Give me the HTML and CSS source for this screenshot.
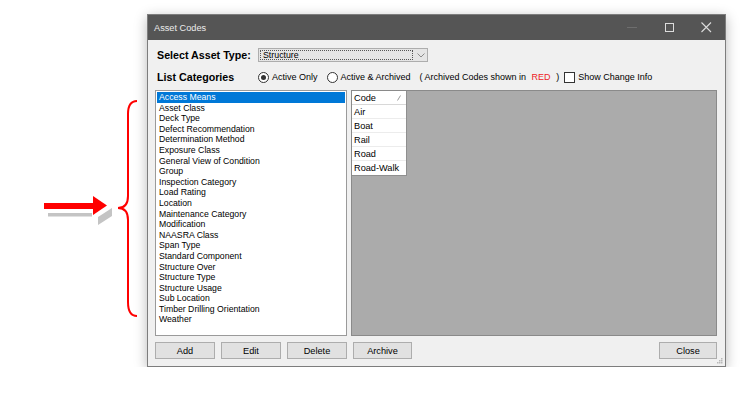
FILE: index.html
```html
<!DOCTYPE html>
<html lang="en">
<head>
    <meta charset="UTF-8">
    <meta name="viewport" content="width=device-width, initial-scale=1.0">
    <title>Asset Codes</title>
    <link rel="stylesheet" href="styles.css">
</head>
<body>
<div class="stage">
  <!-- callout arrow and brace pointing at the category list -->
  <svg class="callout" width="107" height="353" viewBox="0 0 107 353">
    <rect x="8" y="199" width="44" height="3.5" fill="#c4c4c4"/>
    <polygon points="58,203 72,194 72,202 58,211" fill="#c4c4c4"/>
    <rect x="4" y="189" width="50" height="6" fill="#f00"/>
    <polygon points="53,182 67,191.5 53,201" fill="#f00"/>
    <path d="M97,87 C90,87 88,92 88,100 L88,182 C88,190 85,194 78,194 C85,194 88,198 88,206 L88,288 C88,296 90,302 97,302" fill="none" stroke="#f00" stroke-width="2"/>
  </svg>

  <div class="window">
    <div class="titlebar">
      <span class="title">Asset Codes</span>
      <span class="ctl">
        <svg width="11" height="11" viewBox="0 0 11 11"><line x1="0" y1="5.5" x2="10" y2="5.5" stroke="#6e6e6e"/></svg>
      </span>
      <span class="ctl">
        <svg width="10" height="10" viewBox="0 0 10 10"><rect x="0.5" y="0.5" width="8" height="8" fill="none" stroke="#dcdcdc"/></svg>
      </span>
      <span class="ctl">
        <svg width="11" height="11" viewBox="0 0 11 11"><path d="M0.5,0.5 L10,10 M10,0.5 L0.5,10" stroke="#dcdcdc" stroke-width="1.1"/></svg>
      </span>
    </div>

    <div class="content">
      <div class="row type-row">
        <span class="field-label">Select Asset Type:</span>
        <div class="combo">
          <span class="combo-value">Structure</span>
          <svg class="chevron" width="8" height="5" viewBox="0 0 8 5"><path d="M0.5,0.5 L4,4 L7.5,0.5" fill="none" stroke="#8a8a8a"/></svg>
        </div>
      </div>

      <div class="row cat-row">
        <span class="field-label">List Categories</span>
        <label class="opt"><span class="radio checked"></span>Active Only</label>
        <label class="opt opt-2"><span class="radio"></span>Active &amp; Archived</label>
        <span class="note">( Archived Codes shown in <span class="red">RED</span> )</span>
        <label class="opt opt-check"><span class="check"></span>Show Change Info</label>
      </div>

      <div class="main">
        <ul class="listbox">
          <li class="selected">Access Means</li>
          <li>Asset Class</li>
          <li>Deck Type</li>
          <li>Defect Recommendation</li>
          <li>Determination Method</li>
          <li>Exposure Class</li>
          <li>General View of Condition</li>
          <li>Group</li>
          <li>Inspection Category</li>
          <li>Load Rating</li>
          <li>Location</li>
          <li>Maintenance Category</li>
          <li>Modification</li>
          <li>NAASRA Class</li>
          <li>Span Type</li>
          <li>Standard Component</li>
          <li>Structure Over</li>
          <li>Structure Type</li>
          <li>Structure Usage</li>
          <li>Sub Location</li>
          <li>Timber Drilling Orientation</li>
          <li>Weather</li>
        </ul>

        <div class="grid">
          <div class="grid-col">
            <div class="cell head">Code
              <svg class="sort" width="4" height="6" viewBox="0 0 4 6"><line x1="0.5" y1="5.5" x2="3.5" y2="0.5" stroke="#9a9a9a"/></svg>
            </div>
            <div class="cell">Air</div>
            <div class="cell">Boat</div>
            <div class="cell">Rail</div>
            <div class="cell">Road</div>
            <div class="cell">Road-Walk</div>
          </div>
        </div>
      </div>

      <div class="buttons">
        <button class="btn">Add</button>
        <button class="btn">Edit</button>
        <button class="btn">Delete</button>
        <button class="btn btn-archive">Archive</button>
        <button class="btn btn-close">Close</button>
      </div>
    </div>

    <svg class="grip" width="7" height="7" viewBox="0 0 7 7">
      <rect x="5" y="1" width="1.5" height="1.5" fill="#b8b8b8"/>
      <rect x="3" y="3" width="1.5" height="1.5" fill="#b8b8b8"/>
      <rect x="5" y="3" width="1.5" height="1.5" fill="#b8b8b8"/>
      <rect x="1" y="5" width="1.5" height="1.5" fill="#b8b8b8"/>
      <rect x="3" y="5" width="1.5" height="1.5" fill="#b8b8b8"/>
      <rect x="5" y="5" width="1.5" height="1.5" fill="#b8b8b8"/>
    </svg>
  </div>
</div>
</body>
</html>
```

FILE: styles.css
```css
body {
  margin: 0;
  background: #fff;
  font-family: "Liberation Sans", Arial, sans-serif;
  color: #000;
}

.stage {
  display: flex;
  align-items: flex-start;
  padding: 14px 0 0 40px;
}

.callout {
  display: block;
  flex: none;
}

.window {
  position: relative;
  width: 579px;
  height: 353px;
  box-sizing: border-box;
  border: 1px solid #7d7d7d;
  background: #f0f0f0;
  box-shadow: 0 3px 12px rgba(0, 0, 0, 0.28);
  display: flex;
  flex-direction: column;
}

.titlebar {
  height: 25px;
  background: #555;
  display: flex;
  align-items: center;
  flex: none;
}

.title {
  flex: 1;
  padding-left: 6px;
  font-size: 9.2px;
  color: #ececec;
}

.ctl {
  width: 37px;
  height: 25px;
  display: flex;
  align-items: center;
  justify-content: center;
}

.content {
  padding: 0 8px 7px 7px;
  display: flex;
  flex-direction: column;
  flex: 1;
}

.row {
  display: flex;
  align-items: center;
}

.type-row {
  margin-top: 8px;
  height: 14px;
}

.cat-row {
  margin-top: 9px;
  height: 12px;
  font-size: 9px;
}

.field-label {
  width: 101px;
  padding-left: 2px;
  flex: none;
  font-weight: bold;
  font-size: 10.7px;
}

.combo {
  width: 170px;
  height: 14px;
  box-sizing: border-box;
  border: 1px solid #adadad;
  background: #e5e5e5;
  display: flex;
  align-items: center;
  padding: 1px;
}

.combo-value {
  width: 153px;
  height: 10px;
  box-sizing: border-box;
  border: 1px dotted #555;
  font-size: 8.8px;
  line-height: 8px;
  padding-left: 2px;
}

.chevron {
  margin-left: 4px;
}

.opt {
  display: flex;
  align-items: center;
}

.radio {
  width: 11px;
  height: 11px;
  box-sizing: border-box;
  border: 1px solid #333;
  border-radius: 50%;
  background: #fff;
  margin-right: 3px;
  display: flex;
  align-items: center;
  justify-content: center;
}

.radio.checked::after {
  content: "";
  width: 5px;
  height: 5px;
  border-radius: 50%;
  background: #333;
}

.opt-2 {
  margin-left: 9px;
}

.note {
  margin-left: 9px;
}

.red {
  color: #ee1c25;
  margin: 0 3px;
}

.opt-check {
  margin-left: 5px;
}

.check {
  width: 11px;
  height: 11px;
  box-sizing: border-box;
  border: 1px solid #333;
  background: #fff;
  margin-right: 3px;
}

.main {
  margin-top: 7px;
  height: 246px;
  display: flex;
  gap: 4px;
}

.listbox {
  width: 192px;
  margin: 0;
  padding: 1px;
  list-style: none;
  box-sizing: border-box;
  border: 1px solid #9a9a9a;
  background: #fff;
  font-size: 8.7px;
}

.listbox li {
  height: 10.6px;
  line-height: 11.4px;
  padding-left: 2px;
  white-space: nowrap;
}

.listbox li.selected {
  background: #0078d7;
  color: #fff;
}

.grid {
  flex: 1;
  box-sizing: border-box;
  border: 1px solid #8a8a8a;
  background: #ababab;
}

.grid-col {
  width: 54px;
  background: #fff;
  border-right: 1px solid #8f8f8f;
  border-bottom: 1px solid #8f8f8f;
}

.cell {
  height: 14px;
  box-sizing: border-box;
  border-bottom: 1px solid #ececec;
  font-size: 9.2px;
  line-height: 15px;
  padding-left: 2px;
}

.cell:last-child {
  border-bottom: none;
}

.cell.head {
  display: flex;
  justify-content: space-between;
  align-items: center;
  padding-right: 5px;
  padding-top: 1px;
  border-bottom: 1px solid #d8d8d8;
}

.buttons {
  margin-top: 6px;
  display: flex;
  gap: 6px;
}

.btn {
  width: 60px;
  height: 17px;
  padding: 0;
  box-sizing: border-box;
  border: 1px solid #adadad;
  background: #e1e1e1;
  font-family: "Liberation Sans", Arial, sans-serif;
  font-size: 9.2px;
  color: #000;
}

.btn-archive {
  width: 59px;
}

.btn-close {
  width: 58px;
  margin-left: auto;
}

.grip {
  position: absolute;
  right: 2px;
  bottom: 2px;
}
```
